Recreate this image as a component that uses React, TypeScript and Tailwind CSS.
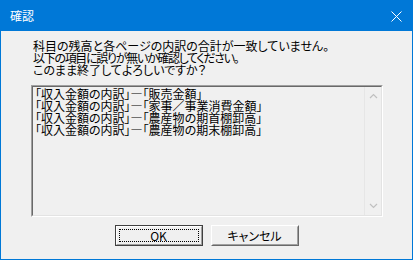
import React from "react";

const font = { fontFamily: '"Noto Sans CJK JP", "Noto Sans", sans-serif' };

const rows = [
  "「収入金額の内訳」―「販売金額」",
  "「収入金額の内訳」―「家事／事業消費金額」",
  "「収入金額の内訳」―「農産物の期首棚卸高」",
  "「収入金額の内訳」―「農産物の期末棚卸高」",
];

export default function App() {
  return (
    <div
      className="w-[413px] h-[260px] flex flex-col bg-[#0078d7] text-[12px] leading-[12px] text-black [font-feature-settings:'palt']"
      style={font}
    >
      <div className="h-[31px] flex items-center justify-between pl-[10px] pr-[11px] text-white text-[12px]">
        <span className="pt-[1px]">確認</span>
        <svg width="11" height="11" viewBox="0 0 11 11" className="mt-[1px]">
          <path d="M0.5 0.5 L10.5 10.5 M10.5 0.5 L0.5 10.5" stroke="white" strokeWidth="1" fill="none" />
        </svg>
      </div>
      <div className="flex-1 mx-[1px] mb-[1px] bg-[#f0f0f0] flex flex-col pt-[9px]">
        <div className="pl-[32px]">
          <div>科目の残高と各ページの内訳の合計が一致していません。</div>
          <div className="tracking-[-1.3px]">以下の項目に誤りが無いか確認してください。</div>
          <div>このまま終了してよろしいですか？</div>
        </div>
        <div className="ml-[30px] mt-[9px] w-[352px] h-[132px] border border-t-[#a0a0a0] border-l-[#a0a0a0] border-r-white border-b-white">
          <div className="w-full h-full border border-t-[#696969] border-l-[#696969] border-r-[#e3e3e3] border-b-[#e3e3e3] flex">
            <div className="flex-1 pl-[2px] pt-[1px]">
              {rows.map((r) => (
                <div key={r}>{r}</div>
              ))}
            </div>
            <div className="w-[17px] flex flex-col justify-between items-center py-[6px] border-l border-[#e6e6e6]">
              <svg width="9" height="6" viewBox="0 0 9 6">
                <path d="M1 5 L4.5 1.5 L8 5" stroke="#c0c0c0" strokeWidth="1.2" fill="none" />
              </svg>
              <svg width="9" height="6" viewBox="0 0 9 6">
                <path d="M1 1 L4.5 4.5 L8 1" stroke="#c0c0c0" strokeWidth="1.2" fill="none" />
              </svg>
            </div>
          </div>
        </div>
        <div className="flex justify-center gap-[8px] mt-[8px]">
          <div className="w-[88px] h-[21px] border border-[#404040] bg-[#f0f0f0]">
            <div className="w-full h-full border border-t-white border-l-white border-r-[#a0a0a0] border-b-[#a0a0a0] p-[2px]">
              <div className="w-full h-full border border-dotted border-black flex items-center justify-center">
                OK
              </div>
            </div>
          </div>
          <div className="w-[88px] h-[21px] border border-t-white border-l-white border-r-[#696969] border-b-[#696969] bg-[#f0f0f0]">
            <div className="w-full h-full border border-t-[#f0f0f0] border-l-[#f0f0f0] border-r-[#a0a0a0] border-b-[#a0a0a0] flex items-center justify-center">
              キャンセル
            </div>
          </div>
        </div>
      </div>
    </div>
  );
}
